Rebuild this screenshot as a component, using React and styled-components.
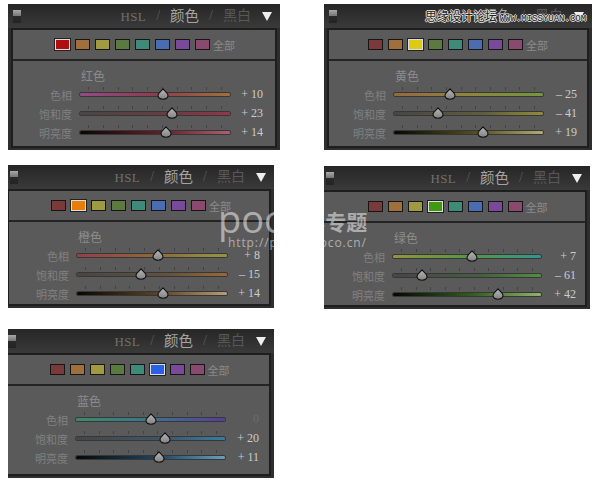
import React from "react";
import styled, { createGlobalStyle } from "styled-components";

const SERIF = '"Liberation Serif", "Noto Sans CJK SC", serif';

const SWATCHES = ["#7a3a3c", "#a0703c", "#a09a40", "#5a7a40", "#3f8a78", "#4a6cb0", "#7a4a9a", "#8a4a70"];

const LEFT_PANELS = [
  {
    name: "红色", active: 0, activeColor: "#b00d10", trackStart: 72, trackW: 150, valueEnd: 255, width: 272, height: 146, top: 4,
    inset: 5, swatchPad: 2, toggle: 0,
    rows: [
      { label: "色相", value: 10, text: "+ 10", colors: "#944a86, #8e3c52 50%, #a07038" },
      { label: "饱和度", value: 23, text: "+ 23", colors: "#464646, #6a3c42 60%, #94364a" },
      { label: "明亮度", value: 14, text: "+ 14", colors: "#0a0606, #642028 55%, #ae6070" },
    ],
  },
  {
    name: "橙色", active: 1, activeColor: "#e87e0a", trackStart: 69, trackW: 150, valueEnd: 252, width: 266, height: 143, top: 15,
    inset: 1, swatchPad: 4, toggle: -3,
    rows: [
      { label: "色相", value: 8, text: "+ 8", colors: "#963e48, #8e6838 50%, #949448" },
      { label: "饱和度", value: -15, text: "– 15", colors: "#464646, #62523e 60%, #966a36" },
      { label: "明亮度", value: 14, text: "+ 14", colors: "#080604, #5e4422 55%, #b89c78" },
    ],
  },
  {
    name: "蓝色", active: 5, activeColor: "#2a60e8", trackStart: 68, trackW: 149, valueEnd: 251, width: 266, height: 149, top: 21,
    inset: 0, swatchPad: 2, toggle: -5,
    rows: [
      { label: "色相", value: 0, text: "0", dim: true, colors: "#3c8a68, #3a7490 50%, #583e96" },
      { label: "饱和度", value: 20, text: "+ 20", colors: "#464646, #3e566c 60%, #387ca4" },
      { label: "明亮度", value: 11, text: "+ 11", colors: "#060808, #1e4660 55%, #68a0bc" },
    ],
  },
];

const RIGHT_PANELS = [
  {
    name: "黄色", active: 2, activeColor: "#dccb10", trackStart: 70, trackW: 149, valueEnd: 253, width: 268, height: 146, top: 4,
    inset: 5, swatchPad: 0, toggle: 0,
    rows: [
      { label: "色相", value: -25, text: "– 25", colors: "#966840, #8e863c 50%, #74963c" },
      { label: "饱和度", value: -41, text: "– 41", colors: "#464646, #605c3c 60%, #908c36" },
      { label: "明亮度", value: 19, text: "+ 19", colors: "#080804, #544e1e 55%, #b0ac74" },
    ],
  },
  {
    name: "绿色", active: 3, activeColor: "#3f9a10", trackStart: 69, trackW: 148, valueEnd: 252, width: 266, height: 143, top: 16,
    inset: 0, swatchPad: 6, toggle: -3,
    rows: [
      { label: "色相", value: 7, text: "+ 7", colors: "#90963c, #589644 50%, #309690" },
      { label: "饱和度", value: -61, text: "– 61", colors: "#464646, #446040 60%, #50903c" },
      { label: "明亮度", value: 42, text: "+ 42", colors: "#040804, #32601e 55%, #90b46c" },
    ],
  },
];

export default function App() {
  return (
    <>
      <GlobalStyle />
      <Page>
        <Column>
          {LEFT_PANELS.map((p) => (
            <HslPanel key={p.name} panel={p} />
          ))}
        </Column>
        <Column>
          {RIGHT_PANELS.map((p) => (
            <HslPanel key={p.name} panel={p} />
          ))}
        </Column>
        <ForumMark>
          思缘设计论坛 <small>WWW.MISSYUAN.COM</small>
        </ForumMark>
        <PocoMark>
          <PocoName>
            poco<b>摄影专题</b>
          </PocoName>
          <PocoUrl>http://photo.poco.cn/</PocoUrl>
        </PocoMark>
      </Page>
    </>
  );
}

function HslPanel({ panel }) {
  return (
    <Panel $width={panel.width} $height={panel.height} $top={panel.top}>
      <Header>
        <Toggle $x={panel.toggle} />
        <Tabs>
          <Hsl>HSL</Hsl>
          <Slash>/</Slash>
          <ColorTab>颜色</ColorTab>
          <Slash>/</Slash>
          <BwTab>黑白</BwTab>
          <svg width="10" height="10" viewBox="0 0 10 10">
            <path d="M0 1h10L5 10z" fill="#eee" />
          </svg>
        </Tabs>
      </Header>
      <Body $inset={panel.inset}>
        <SwatchBar $pad={panel.swatchPad}>
          {SWATCHES.map((c, i) => (
            <Swatch
              key={c}
              $active={i === panel.active}
              $color={i === panel.active ? panel.activeColor : c}
            />
          ))}
          <AllLabel>全部</AllLabel>
        </SwatchBar>
        <Sliders $pad={panel.trackStart - panel.inset}>
          <GroupName>{panel.name}</GroupName>
          {panel.rows.map((r) => (
            <Row key={r.label} $track={panel.trackW}>
              <RowLabel>{r.label}</RowLabel>
              <Track $colors={r.colors}>
                <Ticks>
                  {Array.from({ length: 10 }, (_, i) => (
                    <i key={i} />
                  ))}
                </Ticks>
                <Thumb style={{ left: `${(r.value + 100) / 2}%` }}>
                  <svg width="12" height="12" viewBox="0 0 12 12">
                    <defs>
                      <linearGradient id="knob" x1="0" y1="0" x2="0" y2="1">
                        <stop offset="0" stopColor="#b8b8b8" />
                        <stop offset="1" stopColor="#828282" />
                      </linearGradient>
                    </defs>
                    <path
                      d="M6 .8C7 2.6 11 4.8 11 7.6 11 10 9 11.2 6 11.2S1 10 1 7.6C1 4.8 5 2.6 6 .8z"
                      fill="url(#knob)"
                      stroke="#111"
                      strokeWidth="1.1"
                      strokeLinejoin="round"
                    />
                  </svg>
                </Thumb>
              </Track>
              <RowValue $dim={r.dim} $width={panel.valueEnd - panel.trackStart - panel.trackW - 8}>
                {r.text}
              </RowValue>
            </Row>
          ))}
        </Sliders>
      </Body>
    </Panel>
  );
}

const GlobalStyle = createGlobalStyle`
  html, body {
    margin: 0;
    background: #fff;
  }
`;

const Page = styled.div`
  position: relative;
  width: 600px;
  height: 484px;
  display: grid;
  grid-template-columns: 324px 276px;
  overflow: hidden;
  font-family: ${SERIF};
`;

const Column = styled.div`
  display: flex;
  flex-direction: column;
  align-items: flex-start;

  &:first-child {
    padding-left: 8px;
  }
`;

const Panel = styled.div`
  width: ${(p) => p.$width}px;
  height: ${(p) => p.$height}px;
  margin-top: ${(p) => p.$top}px;
  background: #2e2e2e;
  display: flex;
  flex-direction: column;
  flex: none;
`;

const Header = styled.div`
  height: 24px;
  flex: none;
  display: flex;
  align-items: center;
  justify-content: space-between;
  padding: 0 8px 0 5px;
  background: linear-gradient(#262626, #3a3a3a);
`;

const Toggle = styled.div`
  width: 8px;
  height: 13px;
  margin-left: ${(p) => p.$x}px;
  background: linear-gradient(#a8a8a8 0, #777 45%, #2a2a2a 46%, #242424 100%);
`;

const Tabs = styled.div`
  display: flex;
  align-items: center;
  gap: 10px;
  line-height: 1;

  svg {
    margin-left: 1px;
  }
`;

const Hsl = styled.span`
  font-size: 13px;
  letter-spacing: 0.4px;
  color: #707070;
`;

const Slash = styled.span`
  font-size: 14px;
  color: #5c5c5c;
`;

const ColorTab = styled.span`
  font-size: 14.5px;
  color: #a4a4a4;
`;

const BwTab = styled.span`
  font-size: 14px;
  color: #585858;
`;

const Body = styled.div`
  flex: 1;
  margin: 0 3px 2px ${(p) => (p.$inset >= 5 ? 3 : 0)}px;
  border: 2px solid #1e1e1e;
  border-left-width: ${(p) => (p.$inset >= 5 ? 2 : p.$inset)}px;
  background: #5a5a5a;
  display: flex;
  flex-direction: column;
`;

const SwatchBar = styled.div`
  height: 29px;
  flex: none;
  display: flex;
  align-items: center;
  justify-content: center;
  gap: 5px;
  padding-left: ${(p) => p.$pad}px;
  border-bottom: 2px solid #242424;
`;

const Swatch = styled.span`
  width: 15px;
  height: 11px;
  flex: none;
  box-sizing: border-box;
  background: ${(p) => p.$color};
  border: 1px solid ${(p) => (p.$active ? "#ddd" : "#161616")};
  box-shadow: ${(p) => (p.$active ? "0 0 0 1px #222" : "none")};
`;

const AllLabel = styled.span`
  font-size: 11px;
  color: #8a8a8a;
  margin-left: -2px;
`;

const Sliders = styled.div`
  flex: 1;
  display: flex;
  flex-direction: column;
  padding-top: 8px;
  padding-left: ${(p) => p.$pad}px;
`;

const GroupName = styled.div`
  font-size: 12px;
  line-height: 16px;
  height: 16px;
  padding-left: 1px;
  color: #8c8c8c;
`;

const Row = styled.div`
  display: grid;
  grid-template-columns: 48px ${(p) => p.$track}px auto;
  align-items: center;
  column-gap: 8px;
  height: 19px;
  margin-left: -56px;
`;

const RowLabel = styled.span`
  font-size: 11px;
  color: #808080;
  text-align: right;
`;

const Track = styled.div`
  position: relative;
  height: 3px;
  border-radius: 2px;
  box-shadow: 0 0 0 1px rgba(28, 28, 28, 0.55);
  background: linear-gradient(to right, ${(p) => p.$colors});
`;

const Ticks = styled.div`
  position: absolute;
  left: 0;
  right: 0;
  top: -6px;
  display: flex;
  justify-content: space-between;
  padding: 0 8px;

  i {
    width: 1px;
    height: 3px;
    background: #424242;
  }
`;

const Thumb = styled.div`
  position: absolute;
  top: -5px;
  margin-left: -6px;
  line-height: 0;
`;

const RowValue = styled.span`
  width: ${(p) => p.$width}px;
  font-size: 12px;
  white-space: nowrap;
  text-align: right;
  color: ${(p) => (p.$dim ? "#6c6c6c" : "#cccccc")};
`;

const ForumMark = styled.div`
  position: absolute;
  left: 425px;
  top: 8px;
  white-space: nowrap;
  font-family: "Noto Sans CJK SC", sans-serif;
  font-size: 12px;
  line-height: 16px;
  color: #222;
  text-shadow: 1px 0 0 #e4e4e4, -1px 0 0 #e4e4e4, 0 1px 0 #e4e4e4, 0 -1px 0 #e4e4e4;

  small {
    font-family: "Liberation Mono", monospace;
    font-size: 9px;
  }
`;

const PocoMark = styled.div`
  position: absolute;
  left: 218px;
  top: 200px;
  color: rgba(255, 255, 255, 0.5);
  font-family: "Open Sans", "Noto Sans CJK SC", sans-serif;
`;

const PocoName = styled.div`
  font-size: 38px;
  line-height: 36px;
  white-space: nowrap;

  b {
    font-family: "Noto Sans CJK SC", sans-serif;
    font-size: 21px;
    font-weight: 700;
    margin-left: -22px;
    vertical-align: 3px;
  }
`;

const PocoUrl = styled.div`
  font-size: 12px;
  letter-spacing: 0.9px;
  line-height: 14px;
  margin: -3px 0 0 10px;
`;
